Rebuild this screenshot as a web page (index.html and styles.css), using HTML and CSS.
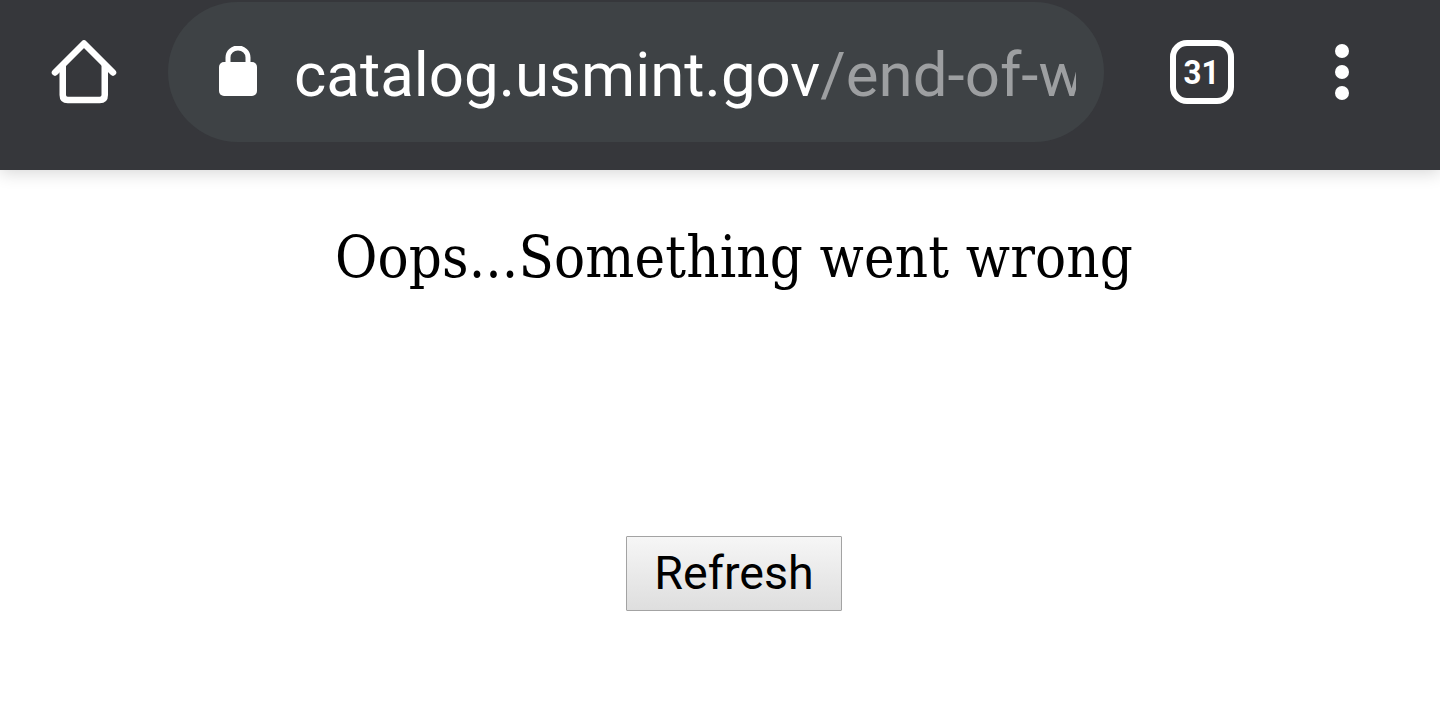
FILE: index.html
```html
<!DOCTYPE html>
<html lang="en">
<head>
    <meta charset="UTF-8">
    <title>Oops</title>
    <link rel="stylesheet" href="styles.css">
</head>
<body>
    <header class="toolbar">
        <div class="home-btn">
            <svg class="home-icon" width="66" height="66" viewBox="0 0 66 66">
                <path d="M4 33.500 L33 4.500 L62 33.500" fill="none" stroke="#fff" stroke-width="6.500" stroke-linecap="round" stroke-linejoin="round"/>
                <path d="M11.750 26 V56 Q11.750 61 16.750 61 H48.750 Q53.750 61 53.750 56 V26" fill="none" stroke="#fff" stroke-width="6.500"/>
            </svg>
        </div>
        <div class="omnibox">
            <svg class="lock-icon" width="38" height="50" viewBox="0 0 38 50">
                <path d="M9 20 V11.500 A10 9.500 0 0 1 29 11.500 V20" fill="none" stroke="#fff" stroke-width="5"/>
                <rect x="0" y="16" width="38" height="34" rx="5" fill="#fff"/>
            </svg>
            <div class="url"><span class="url-host">catalog.usmint.gov</span><span class="url-path">/end-of-w</span></div>
        </div>
        <div class="tabs-btn"><span class="tabs-count">31</span></div>
        <div class="menu-btn">
            <span class="dot"></span>
            <span class="dot"></span>
            <span class="dot"></span>
        </div>
    </header>
    <main class="content">
        <h1 class="title">Oops...Something went wrong</h1>
        <button class="refresh" type="button">Refresh</button>
    </main>
</body>
</html>
```

FILE: styles.css
```css
html, body {
    margin: 0;
    padding: 0;
    height: 100%;
    overflow: hidden;
    background-color: #ffffff;
}
body {
    font-family: Roboto, sans-serif;
}
.toolbar {
    height: 170px;
    background-color: #36373b;
    display: flex;
    align-items: flex-start;
    box-shadow: 0 3px 16px rgba(0, 0, 0, 0.16);
    position: relative;
}
.home-btn {
    width: 168px;
    height: 142px;
    flex-shrink: 0;
    display: flex;
    align-items: center;
    padding-left: 51px;
    box-sizing: border-box;
}
.home-icon {
    margin-top: 2px;
}
.omnibox {
    width: 936px;
    height: 140px;
    margin-top: 2px;
    border-radius: 70px;
    background-color: #3e4245;
    display: flex;
    align-items: center;
    padding-left: 51px;
    box-sizing: border-box;
    flex-shrink: 0;
}
.lock-icon {
    flex-shrink: 0;
    margin-top: -2px;
}
.url {
    width: 782px;
    margin-left: 37px;
    font-size: 61.8px;
    line-height: 72px;
    white-space: nowrap;
    overflow: hidden;
    margin-top: 6px;
}
.url-host {
    color: #ffffff;
}
.url-path {
    color: #9d9fa1;
}
.tabs-btn {
    width: 64px;
    height: 64px;
    margin: 40px 0 0 66px;
    border: 6px solid #ffffff;
    border-radius: 17px;
    box-sizing: border-box;
    display: flex;
    align-items: center;
    justify-content: center;
    flex-shrink: 0;
}
.tabs-count {
    display: inline-block;
    color: #ffffff;
    font-size: 34px;
    font-weight: 700;
    transform: scaleX(0.92);
}
.menu-btn {
    display: flex;
    flex-direction: column;
    gap: 7px;
    margin: 44px 0 0 101px;
}
.dot {
    width: 14px;
    height: 14px;
    border-radius: 50%;
    background-color: #ffffff;
}
.content {
    width: 1468px;
    display: flex;
    flex-direction: column;
    align-items: center;
}
.title {
    margin: 50px 0 0;
    font-family: "DejaVu Serif Condensed", "DejaVu Serif", serif;
    font-weight: 400;
    font-size: 57.5px;
    letter-spacing: 0.15px;
    line-height: 76px;
    color: #000000;
}
.refresh {
    margin-top: 240px;
    width: 216px;
    height: 75px;
    padding: 0 0 2px;
    border: 1px solid #a3a3a3;
    border-radius: 1px;
    background: linear-gradient(#f6f6f6, #dedede);
    font-family: Roboto, sans-serif;
    font-size: 46.6px;
    color: #000000;
}
```
